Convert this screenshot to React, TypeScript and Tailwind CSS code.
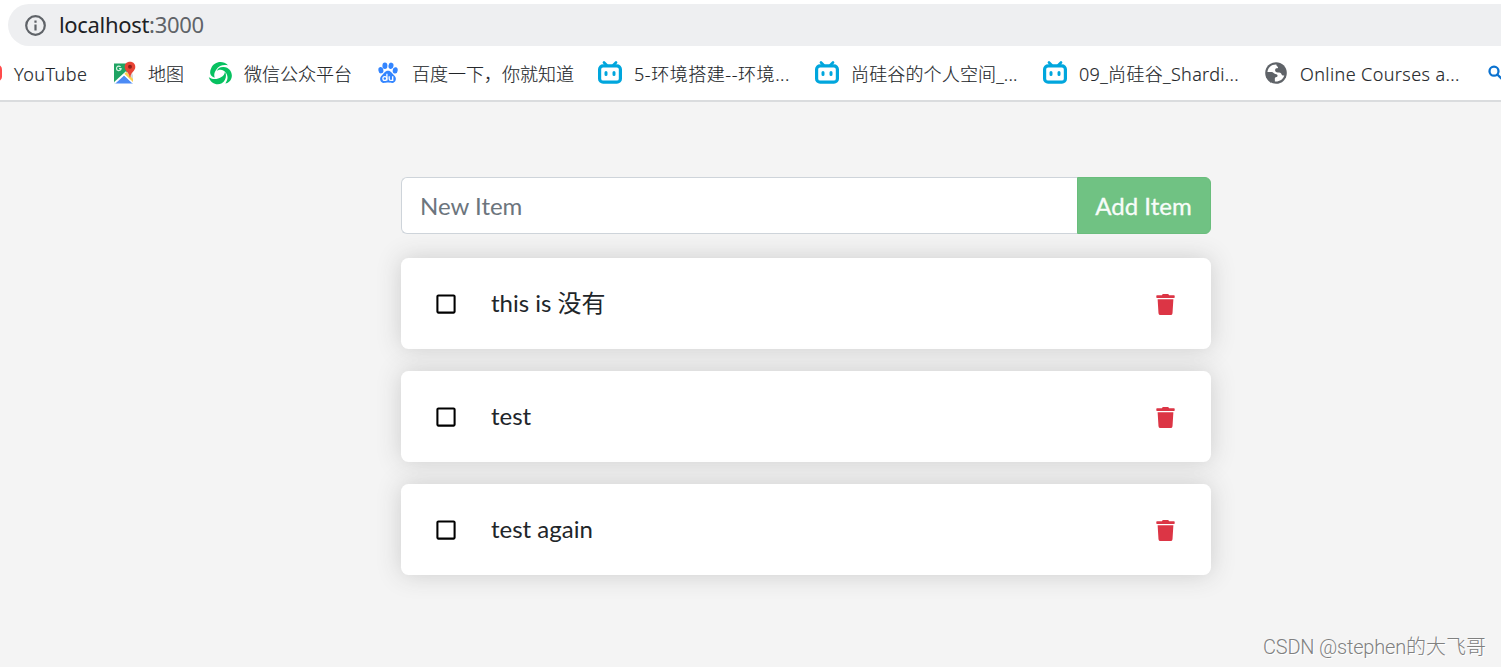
import React from 'react';
import { FaRegSquare, FaTrash } from 'react-icons/fa';

type Bookmark = {
  icon: React.ReactNode;
  title: string;
  className: string;
};

const bookmarks: Bookmark[] = [
  { icon: <YouTubeIcon />, title: 'YouTube', className: 'w-[74px] tracking-[0.45px]' },
  { icon: <MapIcon />, title: '地图', className: 'w-[36px]' },
  { icon: <WechatIcon />, title: '微信公众平台', className: 'w-[108px]' },
  { icon: <BaiduIcon />, title: '百度一下，你就知道', className: 'w-[162px]' },
  { icon: <BilibiliIcon />, title: '5-环境搭建--环境...', className: 'w-[157px] tracking-[0.55px]' },
  { icon: <BilibiliIcon />, title: '尚硅谷的个人空间_...', className: 'w-[168px] tracking-[0.15px]' },
  { icon: <BilibiliIcon />, title: '09_尚硅谷_Shardi...', className: 'w-[161px] tracking-[0.33px]' },
  { icon: <GlobeIcon />, title: 'Online Courses a...', className: 'w-[161px] tracking-[0.4px]' },
  { icon: <SearchIcon />, title: '', className: 'w-0' },
];

const items = ['this is 没有', 'test', 'test again'];

function YouTubeIcon() {
  return (
    <svg viewBox="0 0 24 24" className="size-6">
      <rect x="0" y="3.5" width="24" height="17" rx="5" fill="#ff4b4b" />
      <path d="M10 8v8l6-4z" fill="#fff" />
    </svg>
  );
}

function MapIcon() {
  return (
    <svg viewBox="0 0 24 24" className="size-6">
      <path d="M2 3h19v19H2z" fill="#f1f3f4" />
      <path d="M2 2.500h15V9L5 20.500 2 22z" fill="#1fa463" />
      <path d="M2.500 22.500 12 14l9 8.500z" fill="#4c8bf5" />
      <path d="m2.500 22 12-11" stroke="#fff" strokeWidth="1.800" />
      <path d="m12 13.500 9 8.500" stroke="#fff" strokeWidth="1.500" />
      <path d="m12.500 12.800 3.500-3.300L21 14v6.500z" fill="#d5d9dc" />
      <path d="m12.500 12.800 1.800-1.700L21 18v3z" fill="#ffd04b" />
      <path
        d="M18 .8c-3.200 0-5.300 2.200-5.300 5.100 0 4.100 4.400 5 5 10.400h.6c.6-5.400 5-6.300 5-10.400C23.300 3 21.200.8 18 .8z"
        fill="#e84435"
      />
      <circle cx="18" cy="5.800" r="2" fill="#8f2019" />
      <path d="M8.600 5.900A2.300 2.300 0 1 0 9.100 7.600H7" fill="none" stroke="#d5f2e1" strokeWidth="1.200" />
    </svg>
  );
}

function WechatIcon() {
  return (
    <svg viewBox="0 0 24 24" className="size-6" fill="#07c160">
      <path d="M3.200 7.200C5.800.8 14.500-1.300 20 4.300c-5-.9-9 .2-11.800 4.400-2.200 3.200-2.300 5.500-1.500 8C1.600 15.500 1.300 11 3.200 7.200z" />
      <path d="M15.600 5.900c6.100.2 9.400 6 7.900 11-1 3.100-3.400 5.200-6.100 5.500 2.300-3.200 2.700-6.200 1.400-9.200-1.100-2.600-3.200-4.200-5.900-4.500-1.900-.2-3.300.4-4.300 1.400 1-2.800 3.500-4.400 7-4.200z" />
      <path d="M.8 16.200c4.200 2.600 8.500 2.300 12.200.1 2.300-1.400 3.800-3.200 4-5.900 1.900 3.700 1.100 9.200-3.200 11.800C9 25 2.600 22.200.8 16.200z" />
    </svg>
  );
}

function BaiduIcon() {
  return (
    <svg viewBox="0 0 24 24" className="size-6" fill="#3385ff">
      <ellipse cx="4.900" cy="9.200" rx="2.500" ry="3.200" transform="rotate(-10 4.900 9.200)" />
      <ellipse cx="8.900" cy="4.800" rx="2.500" ry="3.200" />
      <ellipse cx="15" cy="4.800" rx="2.500" ry="3.200" transform="rotate(10 15 4.800)" />
      <ellipse cx="19.200" cy="9.400" rx="2.500" ry="3.200" transform="rotate(8 19.200 9.400)" />
      <path d="M12 9.800c3.200 0 3.800 2.600 5.800 4.200 3.800 3.100 1.900 7.900-1.500 7.900-1.800 0-2.700-.3-4.300-.3s-2.500.3-4.300.3c-3.400 0-5.300-4.800-1.500-7.900 2-1.600 2.600-4.200 5.800-4.200z" />
      <g fill="none" stroke="#fff" strokeWidth="1.300">
        <circle cx="8.800" cy="17.500" r="1.900" />
        <path d="M10.900 12.800v6.800M13.200 15.200v2.700c0 1 .6 1.500 1.600 1.500h1.900v-4.200" />
      </g>
    </svg>
  );
}

function BilibiliIcon() {
  return (
    <svg viewBox="0 0 24 24" className="size-6" fill="none" stroke="#00a6dd">
      <path d="m6 1.500 2.500 2.500M18 1.500 15.500 4" strokeWidth="2.600" strokeLinecap="round" />
      <rect x="1.600" y="4.800" width="20.800" height="16.400" rx="3.500" strokeWidth="3.200" />
      <path d="M8 11.500v2M16 11.500v2" strokeWidth="3" strokeLinecap="round" />
    </svg>
  );
}

function GlobeIcon() {
  return (
    <svg viewBox="0 0 24 24" className="size-6">
      <circle cx="12" cy="12" r="10.800" fill="#5f6368" />
      <path
        d="M12.500 3.400C7.500 3.100 3.800 6.600 3.400 11h4.200c1.900 0 2.200 1.800 3.600 1.900 1.800.1 2.500.6 2.300 2-.2 1.200-1.600 1-2.300 1.700-.6.700-.3 1.700-.3 3.900 4.400.4 8.200-2.100 9.400-6-1.500.2-2.500-.3-2.900-1.500-.4-1.400-1.800-1.500-3.600-1.600-2-.1-2.800-1-2.700-2.400.1-1.300 1-1.700 2-1.700 1.400 0 1-1.500.3-1.900-.8-.5-1.300-1-.9-2z"
        fill="#fff"
      />
    </svg>
  );
}

function SearchIcon() {
  return (
    <svg viewBox="0 0 24 24" className="size-6 shrink-0" fill="none" stroke="#0b72d0" strokeWidth="2.300">
      <circle cx="9" cy="10.200" r="4.500" />
      <path d="m12.300 13.500 5.500 5.500" />
    </svg>
  );
}

function InfoIcon() {
  return (
    <svg viewBox="0 0 21 21" className="size-[21px]" fill="none" stroke="#5f6368" strokeWidth="2.200">
      <circle cx="10.500" cy="10.500" r="9.300" />
      <path d="M10.500 9.500v6M10.500 5.500v2.200" />
    </svg>
  );
}

function AddressBar() {
  return (
    <div className="mt-1 ml-2 flex h-[42px] items-center rounded-l-full bg-[#eeeff1] pl-[17px]">
      <InfoIcon />
      <span className="ml-[13px] pb-0.5 text-[22px] leading-none tracking-[-0.32px] text-[#5f6368]">
        <span className="text-[#202124]">localhost</span>:3000
      </span>
    </div>
  );
}

function BookmarkBar() {
  return (
    <nav className="-ml-[22px] flex h-[54px] items-center gap-6">
      {bookmarks.map(({ icon, title, className }, index) => (
        <div key={index} className="flex shrink-0 items-center gap-3">
          {icon}
          <span
            className={`pt-0.5 text-[18px] leading-6 font-light whitespace-nowrap text-[#202327] [-webkit-text-stroke:0.15px_#3c4043] ${className}`}
          >
            {title}
          </span>
        </div>
      ))}
    </nav>
  );
}

function AddItemForm() {
  return (
    <form className="flex h-[57px]">
      <input
        type="text"
        placeholder="New Item"
        className="min-w-0 flex-1 rounded-l-[6px] border border-r-0 border-[#ced4da] bg-white px-[18px] pt-px placeholder:text-[#6c757d]"
      />
      <button
        type="button"
        className="w-[134px] rounded-r-[6px] border border-[#69bd7c] bg-[#70c283] pt-px pr-px text-[#f8fcf9] [-webkit-text-stroke:0.3px_#f8fcf9]"
      >
        Add Item
      </button>
    </form>
  );
}

function TodoItem({ name }: { name: string }) {
  return (
    <li className="flex h-[91px] items-center rounded-[7.5px] bg-white px-[34px] shadow-[0_0_24px_#ccc]">
      <FaRegSquare className="size-[22px] text-black" />
      <span className="ml-[34px] flex-1 pb-0.5 text-[#212529]">{name}</span>
      <FaTrash className="mt-px mr-px size-[21px] text-[#dc3545]" />
    </li>
  );
}

export default function App() {
  return (
    <div className="flex h-[667px] flex-col overflow-hidden bg-[#f4f4f4]">
      <header className="h-[102px] shrink-0 overflow-hidden border-b-2 border-[#dadcde] bg-white font-['Noto_Sans','Noto_Sans_CJK_SC',sans-serif]">
        <AddressBar />
        <BookmarkBar />
      </header>
      <main className="ml-[401px] w-[810px] flex-1 pt-[75px] font-['Lato','Noto_Sans_CJK_SC',sans-serif] text-[24px] leading-9">
        <AddItemForm />
        <ul className="mt-6 flex flex-col gap-[22px]">
          {items.map((name) => (
            <TodoItem key={name} name={name} />
          ))}
        </ul>
      </main>
      <footer className="mr-[15px] mb-1 self-end font-['Roboto','Noto_Sans_CJK_SC',sans-serif] text-[20px] leading-8 font-light text-[#808080] [text-shadow:1px_1px_0_#fff]">
        <span className="tracking-[-0.2px]">CSDN @stephen</span>的大飞哥
      </footer>
    </div>
  );
}
